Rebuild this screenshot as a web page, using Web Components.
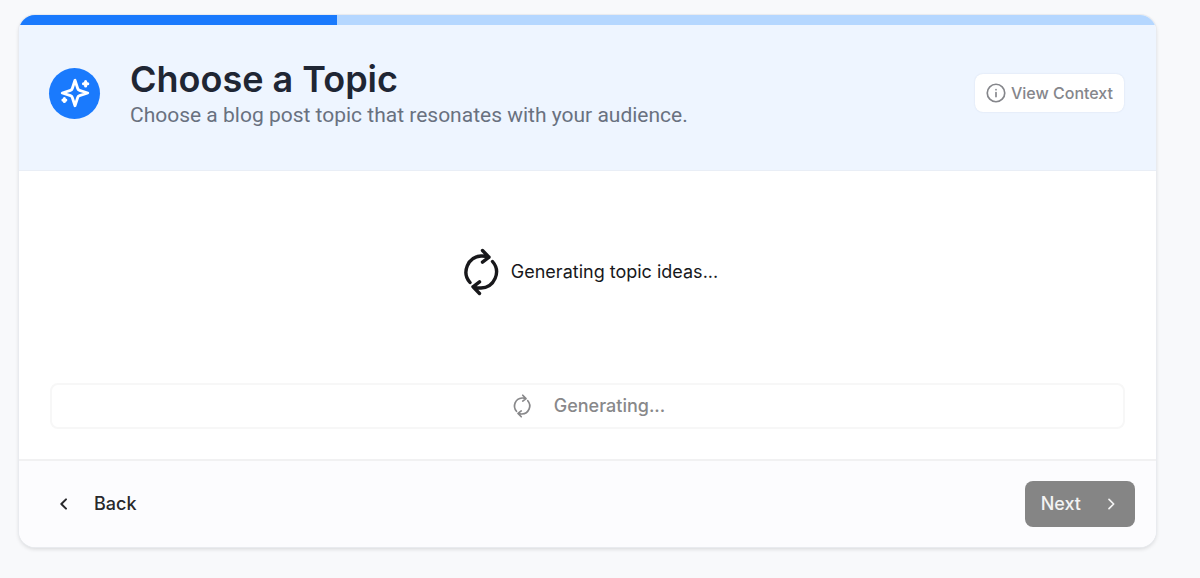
<!DOCTYPE html>
<html lang="en">
<head>
<meta charset="utf-8">
<meta name="viewport" content="width=device-width, initial-scale=1">
<title>Choose a Topic</title>
<style>
body { margin: 0; background: #f8f9fb; font-family: Inter, "Liberation Sans", sans-serif; color: #18181b; }
</style>
</head>
<body>
<wizard-card>
  <step-progress slot="progress" value="28"></step-progress>
  <step-header slot="header">
    <ui-icon slot="icon" name="sparkles"></ui-icon>
    <span slot="title">Choose a Topic</span>
    <span slot="description">Choose a blog post topic that resonates with your audience.</span>
    <action-button slot="action" variant="context"><ui-icon slot="before" name="info"></ui-icon>View Context</action-button>
  </step-header>
  <loading-message>Generating topic ideas...</loading-message>
  <action-button variant="outline"><ui-icon slot="before" name="refresh"></ui-icon>Generating...</action-button>
  <action-button slot="footer" variant="ghost"><ui-icon slot="before" name="left"></ui-icon>Back</action-button>
  <action-button slot="footer" variant="primary">Next<ui-icon slot="after" name="right"></ui-icon></action-button>
</wizard-card>
<script>
function define(name, html, init) {
  const template = document.createElement('template');
  template.innerHTML = html;
  customElements.define(name, class extends HTMLElement {
    connectedCallback() {
      if (this.shadowRoot) return;
      this.attachShadow({ mode: 'open' }).append(template.content.cloneNode(true));
      if (init) init(this, this.shadowRoot);
    }
  });
}

const icons = {
  sparkles: '<svg viewBox="0 0 24 24" stroke-width="2"><path d="M12 3l-1.9 5.8a2 2 0 0 1-1.3 1.3L3 12l5.8 1.9a2 2 0 0 1 1.3 1.3L12 21l1.9-5.8a2 2 0 0 1 1.3-1.3L21 12l-5.8-1.9a2 2 0 0 1-1.3-1.3Z"/><path d="M4.500 16v2M3.500 17h2M19.500 4v3M18 5.500h3" stroke-width="2.200"/></svg>',
  info: '<svg viewBox="0 0 24 24" stroke-width="2"><circle cx="12" cy="12" r="10.5"/><path d="M12 16.5v-5M12 8h.01"/></svg>',
  refresh: '<svg viewBox="0 0 48 48" stroke-width="3.4"><path d="M13 34.500A16 16 0 0 1 24 8q4-.2 8 1.200M25.500 2.500l6.500 6.700-6.500 5M35.500 13.500A16 16 0 0 1 24 40q-4 .2-8-1.200M22.500 45.500l-6.500-6.700 6.500-5"/></svg>',
  left: '<svg viewBox="0 0 24 24" stroke-width="3"><path d="M15 5l-7 7 7 7"/></svg>',
  right: '<svg viewBox="0 0 24 24" stroke-width="2.6"><path d="M9 5l7 7-7 7"/></svg>'
};

define('ui-icon', `<style>
:host { display: block; flex: none; width: 16px; height: 16px; }
svg { display: block; width: 100%; height: 100%; fill: none; stroke: currentColor; stroke-linecap: round; stroke-linejoin: round; }
</style>`, (host, root) => {
  root.innerHTML += icons[host.getAttribute('name')];
});

define('wizard-card', `<style>
:host { display: block; padding: 15px 44px 31px 19px; }
main { overflow: hidden; border-radius: 16px; background: #fff; box-shadow: 0 0 0 1px #e9ebef, 0 2px 4px rgba(0,0,0,.14); }
.body { padding: 30px 31px; }
footer { display: flex; justify-content: space-between; align-items: center; padding: 20px 21px; border-top: 2px solid #f1f1f2; background: #fcfcfe; }
</style>
<main><slot name="progress"></slot><slot name="header"></slot>
<div class="body"><slot></slot></div>
<footer><slot name="footer"></slot></footer></main>`);

define('step-progress', `<style>
:host { display: block; height: 10px; background: #b5d7ff; }
div { height: 100%; background: #1a7afd; }
</style><div role="progressbar" aria-label="Progress" aria-valuemin="0" aria-valuemax="100"></div>`, (host, root) => {
  const bar = root.querySelector('div');
  bar.style.width = host.getAttribute('value') + '%';
  bar.setAttribute('aria-valuenow', host.getAttribute('value'));
});

define('step-header', `<style>
:host { display: block; background: #eef5ff; border-bottom: 1px solid #e9eef6; }
header { display: flex; align-items: center; padding: 32px 32px 41px 30px; }
.badge { display: grid; place-items: center; flex: none; width: 51px; height: 51px; margin-right: 30px; border-radius: 50%; background: #1a7afd; color: #fff; }
.badge ::slotted(ui-icon) { width: 34px; height: 34px; }
.text { flex: 1; }
h1 { margin: 0; font-size: 36px; line-height: 44px; font-weight: 600; color: #1f2634; }
p { margin: 0; font-family: Roboto, Inter, sans-serif; font-size: 21px; line-height: 28px; color: #69717f; }
</style>
<header><div class="badge"><slot name="icon"></slot></div>
<div class="text"><h1><slot name="title"></slot></h1><p><slot name="description"></slot></p></div>
<slot name="action"></slot></header>`);

define('loading-message', `<style>
:host { display: flex; align-items: center; justify-content: center; gap: 6px; padding: 47px 0 87px; font-size: 18px; line-height: 24px; }
ui-icon { width: 48px; height: 48px; }
</style><ui-icon name="refresh"></ui-icon><span role="status"><slot></slot></span>`);

define('action-button', `<style>
:host { display: block; }
button { box-sizing: border-box; display: flex; align-items: center; justify-content: center; width: 100%; height: 46px; margin: 0; padding: 0 16px; border: 0; border-radius: 8px; background: none; font: 500 18px/24px Inter, "Liberation Sans", sans-serif; color: inherit; }
.context { height: 38px; padding: 0 11px; gap: 5px; font-size: 16px; background: #fff; color: #85868b; box-shadow: 0 0 2px rgba(30,60,110,.12); }
.context ::slotted(ui-icon) { width: 20px; height: 20px; }
.outline { gap: 20px; border: 2px solid #f7f7f7; color: #88888a; }
.outline ::slotted(ui-icon) { width: 24px; height: 24px; }
.ghost { gap: 22px; color: #28282b; }
.primary { gap: 22px; background: #858585; color: #f3f3f3; }
</style><button type="button"><slot name="before"></slot><span><slot></slot></span><slot name="after"></slot></button>`, (host, root) => {
  root.querySelector('button').className = host.getAttribute('variant');
});
</script>
</body>
</html>
